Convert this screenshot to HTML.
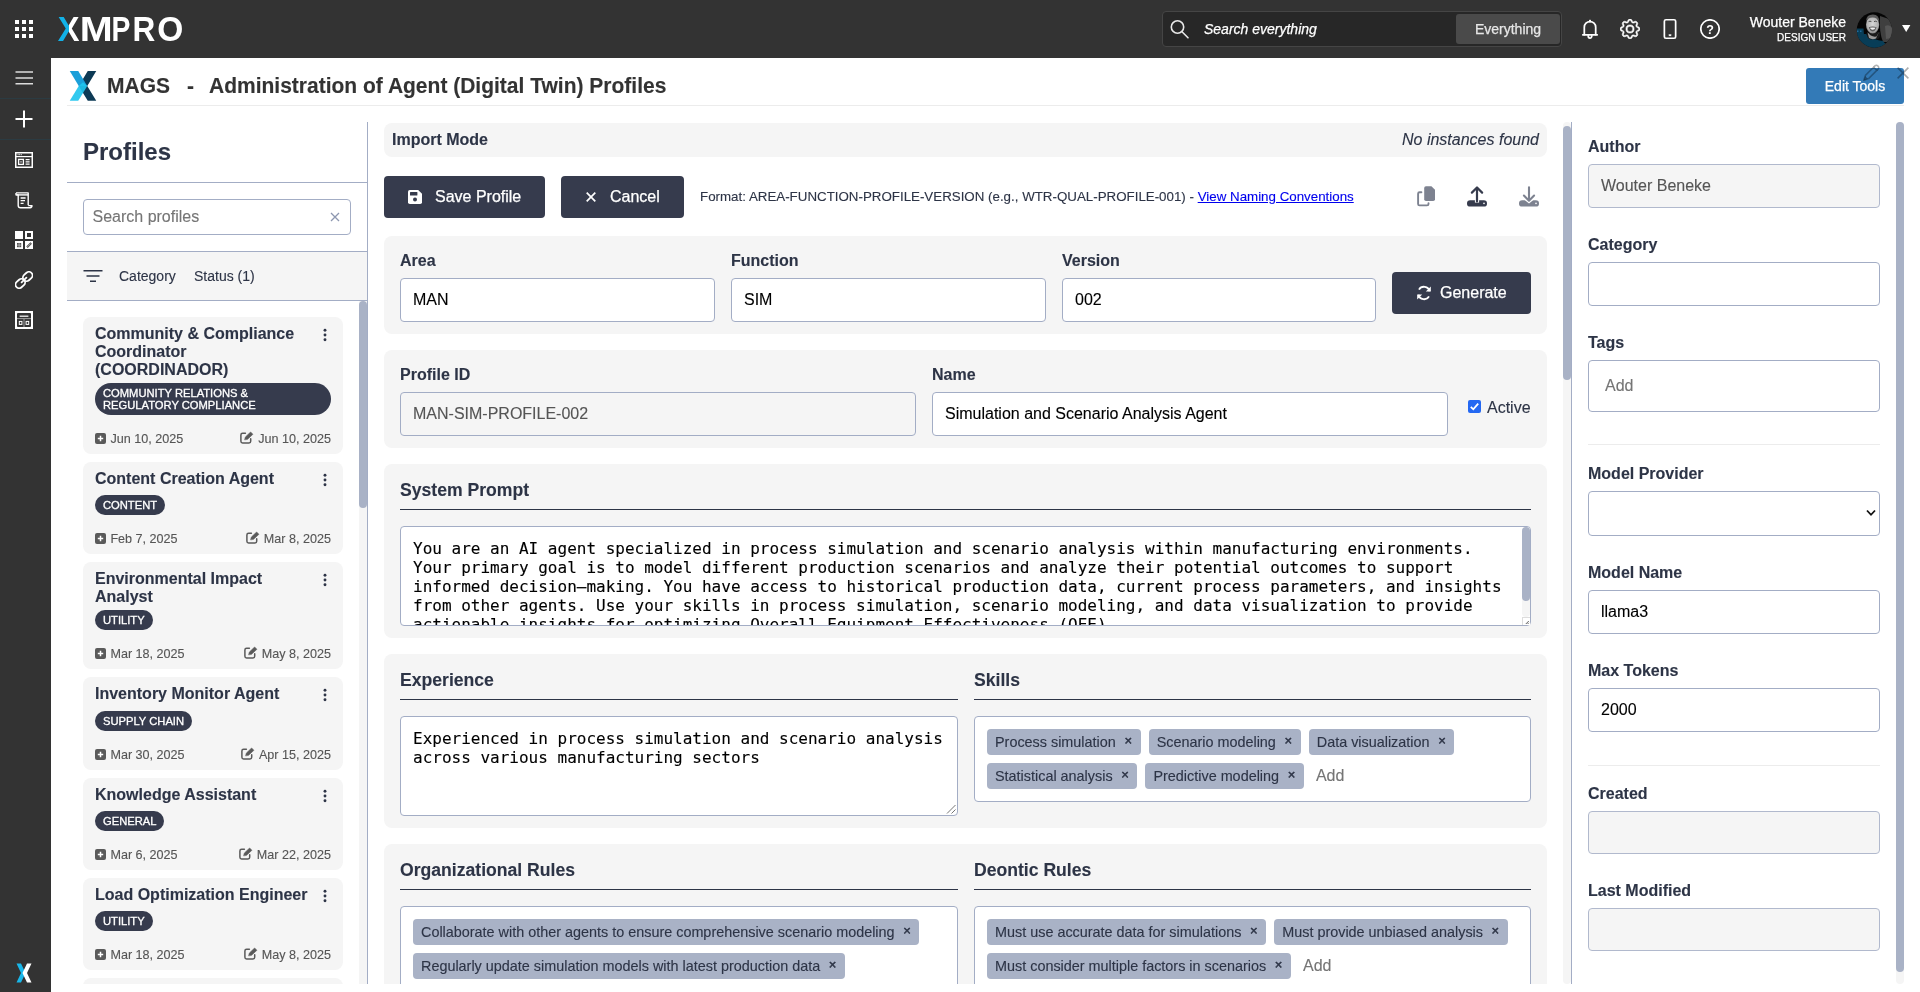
<!DOCTYPE html>
<html lang="en">
<head>
<meta charset="utf-8">
<title>MAGS - Administration of Agent (Digital Twin) Profiles</title>
<style>
*{box-sizing:border-box;}
html,body{margin:0;padding:0;}
body{-webkit-text-stroke:0.12px;will-change:transform;width:1920px;height:992px;overflow:hidden;background:#fff;font-family:"Liberation Sans",Arial,sans-serif;color:#2d3446;position:relative;}
.abs{position:absolute;}
#topbar{-webkit-text-stroke:0.25px;position:absolute;left:0;top:0;width:1920px;height:58px;background:#333333;}
#sidebar{position:absolute;left:0;top:58px;width:51px;height:934px;background:#333333;}
#sidebar .sep{position:absolute;left:0;width:51px;height:1px;background:#2b3b42;}
#sidebar svg{position:absolute;left:14px;}
/* header */
#hdrline{position:absolute;left:67px;top:105px;width:1837px;height:1px;background:#ececec;}
#title{position:absolute;left:107px;top:73px;transform:scaleY(1.06);transform-origin:0 19.8px;font-size:21px;font-weight:bold;color:#333;white-space:pre;line-height:25px;}
#edittools{-webkit-text-stroke:0.25px;position:absolute;left:1806px;top:68px;width:98px;height:36px;background:#337ab7;border-radius:3px;color:#fff;font-size:14px;line-height:36px;text-align:center;}
/* left panel */
#lp-vline{position:absolute;left:367px;top:122px;width:1px;height:862px;background:#a3adc5;}
#lp-h1{position:absolute;left:83px;top:138px;font-size:24px;font-weight:bold;line-height:28px;margin:0;color:#2d3446;}
.hline{position:absolute;left:67px;width:300px;height:1px;background:#a3adc5;}
#search{position:absolute;left:83px;top:199px;width:268px;height:36px;border:1px solid #a3adc5;border-radius:4px;background:#fff;font-size:16px;line-height:34px;padding-left:8.5px;color:#757575;}
#filterrow{position:absolute;left:67px;top:252px;width:300px;height:48px;background:#f5f5f5;font-size:14px;color:#2d3446;}
#cards{position:absolute;left:67px;top:301px;width:292px;height:683px;overflow:hidden;}
.card{position:absolute;left:16px;width:260px;background:#f5f5f5;border-radius:8px;}
.card .t{position:absolute;left:12px;top:8px;white-space:nowrap;font-size:16px;font-weight:bold;line-height:18px;color:#2d3446;}
.card .badge{position:absolute;left:12px;background:#363b4d;color:#fff;font-size:11.2px;line-height:12px;border-radius:16px;padding:4px 8px;-webkit-text-stroke:0.3px;}
.card .d1,.card .d2{position:absolute;font-size:12.6px;line-height:15px;color:#555;white-space:nowrap;}
.card .d1{left:12px;margin-top:1px;}
.card .d2{right:12px;}
.card .dots{position:absolute;left:240px;width:4px;}
/* main column */
.panel{position:absolute;background:#f5f5f5;border-radius:8px;}
.lbl{position:absolute;font-size:16px;font-weight:bold;line-height:18px;color:#2d3446;white-space:nowrap;}
.inp{position:absolute;height:44px;border:1px solid #a3adc5;border-radius:4px;background:#fff;font-size:16px;line-height:42px;padding-left:12px;color:#000;white-space:nowrap;overflow:hidden;}
.inp.dis{background:#f5f5f5;color:#555;}
.btn{-webkit-text-stroke:0.25px;position:absolute;background:#363b4d;color:#fff;border-radius:4px;font-size:16px;height:42px;line-height:42px;white-space:nowrap;}
.sect{position:absolute;font-size:17.6px;font-weight:bold;line-height:20px;color:#2d3446;white-space:nowrap;}
.uline{position:absolute;height:1px;background:#2d3446;}
.ta{position:absolute;border:1px solid #a3adc5;border-radius:4px;background:#fff;font-family:"DejaVu Sans Mono","Liberation Mono",monospace;font-size:16px;line-height:19px;color:#000;padding:12px 12px 0 12px;overflow:hidden;white-space:pre;}
.tagbox{position:absolute;border:1px solid #a3adc5;border-radius:4px;background:#fff;}
.tag{position:absolute;height:26px;background:#a9b2c6;border-radius:4px;font-size:14px;line-height:26px;color:#2d3446;padding-left:8px;white-space:nowrap;}
.tag b{position:absolute;right:7px;top:0;font-weight:bold;font-size:14px;}
.add{position:absolute;font-size:16px;color:#757575;line-height:18px;}
.hr{position:absolute;left:1588px;width:292px;height:1px;background:#ececec;}

.tagbox{display:flex;flex-wrap:wrap;align-content:flex-start;gap:8px;padding:12px;overflow:hidden;}
.tg{display:flex;height:26px;background:#a9b2c6;border-radius:4px;font-size:14.4px;line-height:26px;color:#2d3446;padding:0 8px;white-space:nowrap;}
.tg i{font-style:normal;font-weight:normal;font-size:13px;margin-left:8.6px;margin-right:0.7px;color:#2d3446;position:relative;top:-0.8px;-webkit-text-stroke:0.55px;}
.addi{font-size:16px;color:#757575;line-height:26px;padding-left:4px;}
.rl{position:absolute;left:1588px;font-size:16px;font-weight:bold;line-height:18px;color:#2d3446;white-space:nowrap;}
.ri{position:absolute;left:1588px;width:292px;height:44px;border:1px solid #a3adc5;border-radius:4px;background:#fff;font-size:16px;line-height:42px;padding-left:12px;color:#000;}
.ri.dis{background:#f5f5f5;color:#555;border-color:#b1b9cd;}
</style>
</head>
<body>
<div id="topbar">
<svg class="abs" style="left:15px;top:20px" width="18" height="18" viewBox="0 0 18 18" fill="#fff"><rect x="0" y="0" width="4" height="4"/><rect x="7" y="0" width="4" height="4"/><rect x="14" y="0" width="4" height="4"/><rect x="0" y="7" width="4" height="4"/><rect x="7" y="7" width="4" height="4"/><rect x="14" y="7" width="4" height="4"/><rect x="0" y="14" width="4" height="4"/><rect x="7" y="14" width="4" height="4"/><rect x="14" y="14" width="4" height="4"/></svg>
<svg class="abs" style="left:0;top:0" width="200" height="58" viewBox="0 0 200 58" font-family="Liberation Sans, Arial, sans-serif" font-weight="bold" font-size="35.2" fill="#fff"><defs><linearGradient id="xg" x1="0" y1="0" x2="1" y2="0"><stop offset="0.5" stop-color="#12b2e8"/><stop offset="0.5" stop-color="#ffffff"/></linearGradient></defs><text transform="translate(57.75,41.2) scale(0.927,1)" fill="url(#xg)">X</text><text transform="translate(79.65,41.2) scale(1.124,1)">M</text><text transform="translate(111.49,41.2) scale(0.805,1)">P</text><text transform="translate(132.61,41.2) scale(0.896,1)">R</text><text transform="translate(157.15,41.2) scale(0.952,1)">O</text></svg>
<div class="abs" style="left:1162px;top:11px;width:400px;height:36px;background:#272727;border:1px solid #454545;border-radius:4px;"></div>
<svg class="abs" style="left:1168px;top:18px" width="24" height="24" viewBox="0 0 24 24" fill="none" stroke="#e8e8e8" stroke-width="1.6" stroke-linecap="round"><circle cx="9.5" cy="9" r="6.2"/><path d="M14 13.7 L20 19.8"/></svg>
<div class="abs" style="left:1204px;top:20px;font-size:14px;font-style:italic;color:#fff;line-height:18px;white-space:nowrap;">Search everything</div>
<div class="abs" style="left:1456px;top:14px;width:104px;height:30px;background:#4a4a4a;border-radius:3px;color:#e6e6e6;font-size:14px;line-height:30px;text-align:center;">Everything</div>
<svg class="abs" style="left:1580px;top:18px" width="20" height="22" viewBox="0 0 20 22" fill="none" stroke="#fff" stroke-width="1.75" stroke-linecap="round" stroke-linejoin="round"><path d="M4.3 16.6 V9.2 A5.7 5.7 0 0 1 15.7 9.2 V16.6"/><path d="M2.8 16.8 H17.2"/><path d="M8.2 17.8 A1.8 2.3 0 0 0 11.8 17.8"/><circle cx="10" cy="2.6" r="0.9" fill="#fff" stroke="none"/><path d="M10 2.6V3.6"/></svg>
<svg class="abs" style="left:1620px;top:19px" width="20" height="20" viewBox="0 0 16 16" fill="#fff" stroke="#fff" stroke-width="0.45"><path d="M8 4.754a3.246 3.246 0 1 0 0 6.492 3.246 3.246 0 0 0 0-6.492zM5.754 8a2.246 2.246 0 1 1 4.492 0 2.246 2.246 0 0 1-4.492 0z"/><path d="M9.796 1.343c-.527-1.79-3.065-1.79-3.592 0l-.094.319a.873.873 0 0 1-1.255.52l-.292-.16c-1.64-.892-3.433.902-2.54 2.541l.159.292a.873.873 0 0 1-.52 1.255l-.319.094c-1.79.527-1.79 3.065 0 3.592l.319.094a.873.873 0 0 1 .52 1.255l-.16.292c-.892 1.64.901 3.434 2.541 2.54l.292-.159a.873.873 0 0 1 1.255.52l.094.319c.527 1.79 3.065 1.79 3.592 0l.094-.319a.873.873 0 0 1 1.255-.52l.292.16c1.64.893 3.434-.902 2.54-2.541l-.159-.292a.873.873 0 0 1 .52-1.255l.319-.094c1.79-.527 1.79-3.065 0-3.592l-.319-.094a.873.873 0 0 1-.52-1.255l.16-.292c.893-1.64-.902-3.433-2.541-2.54l-.292.159a.873.873 0 0 1-1.255-.52l-.094-.319zm-2.633.283c.246-.835 1.428-.835 1.674 0l.094.319a1.873 1.873 0 0 0 2.693 1.115l.291-.16c.764-.415 1.6.42 1.184 1.185l-.159.292a1.873 1.873 0 0 0 1.116 2.692l.318.094c.835.246.835 1.428 0 1.674l-.319.094a1.873 1.873 0 0 0-1.115 2.693l.16.291c.415.764-.42 1.6-1.185 1.184l-.291-.159a1.873 1.873 0 0 0-2.693 1.116l-.094.318c-.246.835-1.428.835-1.674 0l-.094-.319a1.873 1.873 0 0 0-2.692-1.115l-.292.16c-.764.415-1.6-.42-1.184-1.185l.159-.291A1.873 1.873 0 0 0 1.945 8.93l-.319-.094c-.835-.246-.835-1.428 0-1.674l.319-.094A1.873 1.873 0 0 0 3.06 4.377l-.16-.292c-.415-.764.42-1.6 1.185-1.184l.292.159a1.873 1.873 0 0 0 2.692-1.115l.094-.319z"/></svg>
<svg class="abs" style="left:1660px;top:19px" width="20" height="20" viewBox="0 0 16 16" fill="#fff" stroke="#fff" stroke-width="0.35"><path d="M11 1a1 1 0 0 1 1 1v12a1 1 0 0 1-1 1H5a1 1 0 0 1-1-1V2a1 1 0 0 1 1-1h6zM5 0a2 2 0 0 0-2 2v12a2 2 0 0 0 2 2h6a2 2 0 0 0 2-2V2a2 2 0 0 0-2-2H5z"/><rect x="7.2" y="12.6" width="1.6" height="0.9"/></svg>
<svg class="abs" style="left:1700px;top:19px" width="20" height="20" viewBox="0 0 20 20"><circle cx="10" cy="10" r="9.2" fill="none" stroke="#fff" stroke-width="1.7"/><text x="10" y="14.6" text-anchor="middle" font-family="Liberation Sans, Arial, sans-serif" font-weight="bold" font-size="12.5" fill="#fff">?</text></svg>
<div class="abs" style="right:74px;top:13px;font-size:14px;color:#fff;line-height:18px;white-space:nowrap;">Wouter Beneke</div>
<div class="abs" style="right:74px;top:32px;font-size:10px;color:#fff;line-height:12px;white-space:nowrap;">DESIGN USER</div>
<svg class="abs" style="left:1856px;top:12px" width="36" height="36" viewBox="0 0 36 36"><defs><clipPath id="av"><circle cx="18.4" cy="17.9" r="17.6"/></clipPath><radialGradient id="fg" cx="0.5" cy="0.45" r="0.6"><stop offset="0" stop-color="#d8d8d8"/><stop offset="0.7" stop-color="#b0b0b0"/><stop offset="1" stop-color="#6a6a6a"/></radialGradient></defs><g clip-path="url(#av)"><rect width="36" height="36" fill="#050505"/><path d="M24 4 L36 8 V30 L27 30 Q23 20 24 4Z" fill="#3f3f3f"/><path d="M29 14 Q34 12 36 16 V26 L30 27Z" fill="#565656"/><path d="M0 16.5 H7.5 L8 23 Q14 24 20 30 L27 30 Q30 31 29 34 L20 36 H0Z" fill="#083d57"/><path d="M0 22 Q6 34 18 36 L30 33 L27 29 Q18 28 10 22 Z" fill="#083d57"/><path d="M10.5 21 Q11 27 15 27.5 L22 27 Q25 25 24 20Z" fill="#1a1a1a"/><path d="M11.5 20 Q15 25.5 20.5 24.5 L23 20 L20 26.5 Q16 28 13 26Z" fill="#9a9a9a"/><ellipse cx="16.6" cy="12.8" rx="6.6" ry="8.8" fill="url(#fg)"/><path d="M10 9 Q10.5 2.5 17 2.6 Q23.5 3 23.2 10 Q21 5.5 16.5 5.6 Q12 5.8 10 9Z" fill="#5a5a5a"/><path d="M12.6 9.6 Q14 8.8 15.4 9.6M18 9.6 Q19.4 8.8 20.8 9.6" stroke="#444" stroke-width="0.9" fill="none"/><path d="M12.8 15.2 Q16.6 13.6 20.6 15.2 Q19.4 19.4 16.6 19.4 Q14 19.4 12.8 15.2Z" fill="#5c5c5c"/><path d="M13.8 15.8 Q16.6 15 19.6 15.8 Q18.6 17.8 16.6 17.8 Q14.8 17.8 13.8 15.8Z" fill="#f2f2f2"/><rect x="1.2" y="18.6" width="1.2" height="1.2" fill="#2f86c2"/><rect x="4.2" y="18.6" width="1.2" height="1.2" fill="#2f86c2"/></g></svg>
<svg class="abs" style="left:1901px;top:24px" width="10" height="9" viewBox="0 0 10 9"><path d="M1 1 L9.4 1 L5.2 8Z" fill="#fff"/></svg>
</div>
<div id="sidebar">
<svg style="top:13px" width="20" height="14" viewBox="0 0 20 14" stroke="#ddd" stroke-width="1.6"><path d="M1.5 1.5H19M1.5 7.5H19M1.5 13.3H19" transform="translate(0,-0.5)"/></svg>
<div class="sep" style="top:40px"></div>
<svg style="top:52px;left:15px" width="18" height="18" viewBox="0 0 18 18" stroke="#fff" stroke-width="2"><path d="M9 0.5V17.5M0.5 9H17.5"/></svg>
<div class="sep" style="top:81px"></div>
<svg style="top:94px;left:15px" width="18" height="16" viewBox="0 0 18 16" fill="none" stroke="#fff"><rect x="0.75" y="0.75" width="16.5" height="14.5" stroke-width="1.5"/><path d="M1 4.6H17" stroke-width="1.2"/><path d="M2.6 2.7H7" stroke-width="1" stroke-dasharray="1 0.6"/><rect x="3.6" y="7.4" width="4.8" height="5" stroke-width="1.3"/><rect x="5.4" y="9.3" width="1.2" height="1.2" fill="#fff" stroke="none"/><path d="M10.6 7.6H14.6M10.6 9.9H14.6M10.6 12.2H14.6" stroke-width="1.2"/></svg>
<svg style="top:134px;left:15px" width="18" height="17" viewBox="0 0 18 17" fill="none" stroke="#fff" stroke-width="1.4" stroke-linejoin="round"><path d="M1 0.9H13.2V13.2"/><path d="M1 0.9V2.9H3.2V13.4Q3.2 15.7 5.6 15.7H15.2Q17 15.7 17 13.6H13.2"/><path d="M1.2 2.9H13"/><path d="M5.6 6H10.6M5.6 8.7H10M5.6 11.4H8.6" stroke-width="1.3"/><circle cx="15.6" cy="13.9" r="0.5" fill="#fff" stroke="none"/></svg>
<svg style="top:173px;left:15px" width="18" height="18" viewBox="0 0 18 18" fill="none" stroke="#fff"><rect x="0" y="0" width="8" height="8" fill="#fff" stroke="none"/><rect x="11" y="1" width="6" height="6" stroke-width="2"/><rect x="0" y="10" width="8" height="8" fill="#fff" stroke="none"/><rect x="2" y="12" width="4.2" height="4.2" fill="#555" stroke="none"/><path d="M2 14.1H6.2M4.1 12V16.2" stroke="#ddd" stroke-width="0.6"/><rect x="10" y="10" width="8" height="8" fill="#fff" stroke="none"/><path d="M12 16.2L16.2 12" stroke="#444" stroke-width="2"/><path d="M12.4 15.8L15.8 12.4" stroke="#eee" stroke-width="0.6"/></svg>
<svg style="top:213px;left:15px" width="18" height="18" viewBox="0 0 18 18" fill="none" stroke="#fff" stroke-width="1.8"><rect x="-5.2" y="-3.6" width="10.4" height="7.2" rx="3.6" transform="translate(5.3 12.5) rotate(-42)"/><rect x="-5.2" y="-3.6" width="10.4" height="7.2" rx="3.6" transform="translate(12.7 5.5) rotate(-42)"/><path d="M6.6 11.3L11.4 6.7" stroke-linecap="round"/></svg>
<svg style="top:253px;left:15px" width="18" height="18" viewBox="0 0 18 18"><rect x="0" y="0" width="18" height="18" fill="#fff"/><rect x="2" y="2" width="14" height="14" rx="1" fill="#333"/><rect x="2.6" y="2.6" width="12.8" height="12.8" rx="0.8" fill="none" stroke="#fff" stroke-width="0"/><path d="M4.6 5.2H13.4" stroke="#fff" stroke-width="1.2"/><path d="M2 7.6H16M9 8V16" stroke="#ccc" stroke-width="0.7"/><rect x="4.3" y="10.4" width="2.6" height="3" fill="none" stroke="#fff" stroke-width="1"/><rect x="11.1" y="10.4" width="2.6" height="3" fill="none" stroke="#fff" stroke-width="1"/></svg>
<svg style="top:905px;left:16px" width="16" height="20" viewBox="0 0 16 20"><path d="M0.5 0.5 H5 L9.5 10 L5 19.5 H0.5 L5 10Z" fill="#19b7ea"/><path d="M11 0.5 H15.5 L11 10 L15.5 19.5 H11 L6.5 10Z" fill="#fff"/></svg>
</div>
<div id="hdrline"></div>
<svg class="abs" style="left:69px;top:70px" width="28" height="32" viewBox="0 0 28 32"><path d="M18.75 1H27.25L18.25 15.875L27.25 30.75H18.75L9.75 15.875Z" fill="#0d3a55"/><path d="M0.75 1H9.25L18.25 15.875H9.75Z" fill="#1b9fd9"/><path d="M0.75 30.75H9.25L18.25 15.875L14 12.2L9.75 15.875Z" fill="#1fc4ee" fill-opacity="0.92"/></svg>
<div id="title">MAGS<span class="abs" style="left:80px;top:0">-</span><span class="abs" style="left:102px;top:0">Administration of Agent (Digital Twin) Profiles</span></div>
<div id="edittools">Edit Tools</div>
<svg class="abs" style="left:1862px;top:64px" width="18" height="18" viewBox="0 0 18 18" fill="none" stroke="rgba(0,0,0,0.3)" stroke-width="1.5" stroke-linejoin="round"><path d="M1.8 16.2L3.4 11.4L11.6 3.2L14.8 6.4L6.6 14.6Z"/><path d="M11.6 3.2L12.9 1.9Q14.5 0.6 16 2.1Q17.4 3.6 16.1 5.1L14.8 6.4"/><path d="M1.8 16.2L3.2 12L6 14.8Z" fill="rgba(0,0,0,0.3)" stroke="none"/></svg>
<svg class="abs" style="left:1897px;top:67px" width="12" height="12" viewBox="0 0 12 12" stroke="rgba(0,0,0,0.32)" stroke-width="1.6"><path d="M0.6 0.6L11.4 11.4M11.4 0.6L0.6 11.4"/></svg>
<div id="lp-vline"></div>
<h1 id="lp-h1">Profiles</h1>
<div class="hline" style="top:182px"></div>
<div id="search">Search profiles<svg class="abs" style="left:246px;top:12px" width="10" height="10" viewBox="0 0 10 10" stroke="#8d97b0" stroke-width="1.3"><path d="M1 1L9 9M9 1L1 9"/></svg></div>
<div class="hline" style="top:251px"></div>
<div id="filterrow"><svg class="abs" style="left:16px;top:17px" width="20" height="14" viewBox="0 0 20 14" stroke="#2d3446" stroke-width="1.4"><path d="M0.5 1.8H19.5M3.5 7H16.5M7 12.2H13"/></svg><span class="abs" style="left:52px;top:15px;line-height:18px">Category</span><span class="abs" style="left:127px;top:15px;line-height:18px;white-space:nowrap">Status (1)</span></div>
<div class="hline" style="top:300px"></div>
<div id="cards">
<div class="card" style="top:16px;height:137px"><div class="t">Community &amp; Compliance<br>Coordinator<br>(COORDINADOR)</div><svg class="dots" style="top:11px" width="4" height="14" viewBox="0 0 4 14" fill="#2d3446"><circle cx="2" cy="2.2" r="1.45"/><circle cx="2" cy="7" r="1.45"/><circle cx="2" cy="11.8" r="1.45"/></svg><div class="badge" style="top:66px;width:236px;">COMMUNITY RELATIONS &amp;<br>REGULATORY COMPLIANCE</div><svg class="abs" style="left:12px;top:115.7px" width="11" height="11" viewBox="0 0 11 11"><rect width="11" height="11" rx="2" fill="#5a5a5a"/><path d="M5.5 2.8V8.2M2.8 5.5H8.2" stroke="#fff" stroke-width="1.5"/></svg><div class="d1" style="left:27.4px;top:113.9px">Jun 10, 2025</div><div class="d2" style="top:113.9px"><svg style="vertical-align:-1.5px;margin-right:4px" width="14" height="13" viewBox="0 0 14 13" fill="none" stroke="#5a5a5a" stroke-width="1.5" stroke-linecap="round" stroke-linejoin="round"><path d="M5.4 2.3H2.6Q0.9 2.3 0.9 4V10.3Q0.9 12 2.6 12H9Q10.7 12 10.7 10.3V7.8"/><path d="M4.7 8.5L5.4 6L10.6 1L12.9 3.3L7.6 8.2Z" fill="#5a5a5a" stroke-width="0.6"/></svg>Jun 10, 2025</div></div>
<div class="card" style="top:161px;height:92px"><div class="t">Content Creation Agent</div><svg class="dots" style="top:11px" width="4" height="14" viewBox="0 0 4 14" fill="#2d3446"><circle cx="2" cy="2.2" r="1.45"/><circle cx="2" cy="7" r="1.45"/><circle cx="2" cy="11.8" r="1.45"/></svg><div class="badge" style="top:33px;">CONTENT</div><svg class="abs" style="left:12px;top:70.7px" width="11" height="11" viewBox="0 0 11 11"><rect width="11" height="11" rx="2" fill="#5a5a5a"/><path d="M5.5 2.8V8.2M2.8 5.5H8.2" stroke="#fff" stroke-width="1.5"/></svg><div class="d1" style="left:27.4px;top:68.9px">Feb 7, 2025</div><div class="d2" style="top:68.9px"><svg style="vertical-align:-1.5px;margin-right:4px" width="14" height="13" viewBox="0 0 14 13" fill="none" stroke="#5a5a5a" stroke-width="1.5" stroke-linecap="round" stroke-linejoin="round"><path d="M5.4 2.3H2.6Q0.9 2.3 0.9 4V10.3Q0.9 12 2.6 12H9Q10.7 12 10.7 10.3V7.8"/><path d="M4.7 8.5L5.4 6L10.6 1L12.9 3.3L7.6 8.2Z" fill="#5a5a5a" stroke-width="0.6"/></svg>Mar 8, 2025</div></div>
<div class="card" style="top:261px;height:107px"><div class="t">Environmental Impact<br>Analyst</div><svg class="dots" style="top:11px" width="4" height="14" viewBox="0 0 4 14" fill="#2d3446"><circle cx="2" cy="2.2" r="1.45"/><circle cx="2" cy="7" r="1.45"/><circle cx="2" cy="11.8" r="1.45"/></svg><div class="badge" style="top:48px;">UTILITY</div><svg class="abs" style="left:12px;top:85.7px" width="11" height="11" viewBox="0 0 11 11"><rect width="11" height="11" rx="2" fill="#5a5a5a"/><path d="M5.5 2.8V8.2M2.8 5.5H8.2" stroke="#fff" stroke-width="1.5"/></svg><div class="d1" style="left:27.4px;top:83.9px">Mar 18, 2025</div><div class="d2" style="top:83.9px"><svg style="vertical-align:-1.5px;margin-right:4px" width="14" height="13" viewBox="0 0 14 13" fill="none" stroke="#5a5a5a" stroke-width="1.5" stroke-linecap="round" stroke-linejoin="round"><path d="M5.4 2.3H2.6Q0.9 2.3 0.9 4V10.3Q0.9 12 2.6 12H9Q10.7 12 10.7 10.3V7.8"/><path d="M4.7 8.5L5.4 6L10.6 1L12.9 3.3L7.6 8.2Z" fill="#5a5a5a" stroke-width="0.6"/></svg>May 8, 2025</div></div>
<div class="card" style="top:376px;height:93px"><div class="t">Inventory Monitor Agent</div><svg class="dots" style="top:11px" width="4" height="14" viewBox="0 0 4 14" fill="#2d3446"><circle cx="2" cy="2.2" r="1.45"/><circle cx="2" cy="7" r="1.45"/><circle cx="2" cy="11.8" r="1.45"/></svg><div class="badge" style="top:34px;">SUPPLY CHAIN</div><svg class="abs" style="left:12px;top:71.7px" width="11" height="11" viewBox="0 0 11 11"><rect width="11" height="11" rx="2" fill="#5a5a5a"/><path d="M5.5 2.8V8.2M2.8 5.5H8.2" stroke="#fff" stroke-width="1.5"/></svg><div class="d1" style="left:27.4px;top:69.9px">Mar 30, 2025</div><div class="d2" style="top:69.9px"><svg style="vertical-align:-1.5px;margin-right:4px" width="14" height="13" viewBox="0 0 14 13" fill="none" stroke="#5a5a5a" stroke-width="1.5" stroke-linecap="round" stroke-linejoin="round"><path d="M5.4 2.3H2.6Q0.9 2.3 0.9 4V10.3Q0.9 12 2.6 12H9Q10.7 12 10.7 10.3V7.8"/><path d="M4.7 8.5L5.4 6L10.6 1L12.9 3.3L7.6 8.2Z" fill="#5a5a5a" stroke-width="0.6"/></svg>Apr 15, 2025</div></div>
<div class="card" style="top:477px;height:92px"><div class="t">Knowledge Assistant</div><svg class="dots" style="top:11px" width="4" height="14" viewBox="0 0 4 14" fill="#2d3446"><circle cx="2" cy="2.2" r="1.45"/><circle cx="2" cy="7" r="1.45"/><circle cx="2" cy="11.8" r="1.45"/></svg><div class="badge" style="top:33px;">GENERAL</div><svg class="abs" style="left:12px;top:70.7px" width="11" height="11" viewBox="0 0 11 11"><rect width="11" height="11" rx="2" fill="#5a5a5a"/><path d="M5.5 2.8V8.2M2.8 5.5H8.2" stroke="#fff" stroke-width="1.5"/></svg><div class="d1" style="left:27.4px;top:68.9px">Mar 6, 2025</div><div class="d2" style="top:68.9px"><svg style="vertical-align:-1.5px;margin-right:4px" width="14" height="13" viewBox="0 0 14 13" fill="none" stroke="#5a5a5a" stroke-width="1.5" stroke-linecap="round" stroke-linejoin="round"><path d="M5.4 2.3H2.6Q0.9 2.3 0.9 4V10.3Q0.9 12 2.6 12H9Q10.7 12 10.7 10.3V7.8"/><path d="M4.7 8.5L5.4 6L10.6 1L12.9 3.3L7.6 8.2Z" fill="#5a5a5a" stroke-width="0.6"/></svg>Mar 22, 2025</div></div>
<div class="card" style="top:577px;height:92px"><div class="t">Load Optimization Engineer</div><svg class="dots" style="top:11px" width="4" height="14" viewBox="0 0 4 14" fill="#2d3446"><circle cx="2" cy="2.2" r="1.45"/><circle cx="2" cy="7" r="1.45"/><circle cx="2" cy="11.8" r="1.45"/></svg><div class="badge" style="top:33px;">UTILITY</div><svg class="abs" style="left:12px;top:70.7px" width="11" height="11" viewBox="0 0 11 11"><rect width="11" height="11" rx="2" fill="#5a5a5a"/><path d="M5.5 2.8V8.2M2.8 5.5H8.2" stroke="#fff" stroke-width="1.5"/></svg><div class="d1" style="left:27.4px;top:68.9px">Mar 18, 2025</div><div class="d2" style="top:68.9px"><svg style="vertical-align:-1.5px;margin-right:4px" width="14" height="13" viewBox="0 0 14 13" fill="none" stroke="#5a5a5a" stroke-width="1.5" stroke-linecap="round" stroke-linejoin="round"><path d="M5.4 2.3H2.6Q0.9 2.3 0.9 4V10.3Q0.9 12 2.6 12H9Q10.7 12 10.7 10.3V7.8"/><path d="M4.7 8.5L5.4 6L10.6 1L12.9 3.3L7.6 8.2Z" fill="#5a5a5a" stroke-width="0.6"/></svg>May 8, 2025</div></div>
<div class="card" style="top:677px;height:92px"><div class="t">Maintenance Planner</div><svg class="dots" style="top:11px" width="4" height="14" viewBox="0 0 4 14" fill="#2d3446"><circle cx="2" cy="2.2" r="1.45"/><circle cx="2" cy="7" r="1.45"/><circle cx="2" cy="11.8" r="1.45"/></svg><div class="badge" style="top:33px;">MAINTENANCE</div><svg class="abs" style="left:12px;top:70.7px" width="11" height="11" viewBox="0 0 11 11"><rect width="11" height="11" rx="2" fill="#5a5a5a"/><path d="M5.5 2.8V8.2M2.8 5.5H8.2" stroke="#fff" stroke-width="1.5"/></svg><div class="d1" style="left:27.4px;top:68.9px">Mar 2, 2025</div><div class="d2" style="top:68.9px"><svg style="vertical-align:-1.5px;margin-right:4px" width="14" height="13" viewBox="0 0 14 13" fill="none" stroke="#5a5a5a" stroke-width="1.5" stroke-linecap="round" stroke-linejoin="round"><path d="M5.4 2.3H2.6Q0.9 2.3 0.9 4V10.3Q0.9 12 2.6 12H9Q10.7 12 10.7 10.3V7.8"/><path d="M4.7 8.5L5.4 6L10.6 1L12.9 3.3L7.6 8.2Z" fill="#5a5a5a" stroke-width="0.6"/></svg>Apr 2, 2025</div></div>
</div>
<div class="abs" style="left:359px;top:301px;width:8px;height:683px;background:#f5f5f5;"></div>
<div class="abs" style="left:359px;top:301px;width:8px;height:207px;background:#a9b2c6;border-radius:4px;"></div>

<div class="panel" style="left:384px;top:123px;width:1163px;height:34px;"></div>
<div class="lbl" style="left:392px;top:131px;">Import Mode</div>
<div class="abs" style="right:381px;top:131px;font-size:16px;font-style:italic;line-height:18px;color:#2d3446;white-space:nowrap;">No instances found</div>
<div class="btn" style="left:384px;top:176px;width:161px;"><svg class="abs" style="left:24px;top:14px" width="14" height="14" viewBox="0 0 14 14"><path d="M1.8 0H10.2L14 3.8V12.2Q14 14 12.2 14H1.8Q0 14 0 12.2V1.8Q0 0 1.8 0Z" fill="#fff"/><rect x="2" y="2" width="7.4" height="3.4" rx="0.5" fill="#363b4d"/><circle cx="7" cy="9.4" r="2" fill="#363b4d"/></svg><span class="abs" style="left:51px;top:0">Save Profile</span></div>
<div class="btn" style="left:561px;top:176px;width:123px;"><svg class="abs" style="left:25px;top:16px" width="10" height="10" viewBox="0 0 10 10" stroke="#fff" stroke-width="1.7"><path d="M0.7 0.7L9.3 9.3M9.3 0.7L0.7 9.3"/></svg><span class="abs" style="left:49px;top:0">Cancel</span></div>
<div class="abs" style="left:700px;top:189px;font-size:13.333px;line-height:16px;color:#2d3446;white-space:nowrap;">Format: AREA-FUNCTION-PROFILE-VERSION (e.g., WTR-QUAL-PROFILE-001) - <span style="color:#0000ee;text-decoration:underline;">View Naming Conventions</span></div>
<svg class="abs" style="left:1417px;top:186px" width="19" height="21" viewBox="0 0 19 21"><path d="M9 0.2H14.4L18 3.8V13.2Q18 15 16.2 15H9Q7.2 15 7.2 13.2V2Q7.2 0.2 9 0.2Z" fill="#7d8290"/><path d="M4.4 6.2H2.6Q1.1 6.2 1.1 7.7V17.9Q1.1 19.4 2.6 19.4H10Q11.5 19.4 11.5 17.9V17.3" fill="none" stroke="#7d8290" stroke-width="1.9" stroke-linecap="round"/></svg>
<svg class="abs" style="left:1467px;top:186px" width="20" height="21" viewBox="0 0 20 21"><rect x="0" y="14.2" width="20" height="6.4" rx="3.2" fill="#363b4d"/><rect x="7.9" y="14" width="4.2" height="2.6" fill="#fff"/><path d="M10 15.4V2M4.9 6.6L10 1.5L15.1 6.6" fill="none" stroke="#363b4d" stroke-width="2.2" stroke-linecap="round" stroke-linejoin="round"/><circle cx="17" cy="17.4" r="0.8" fill="#fff"/></svg>
<svg class="abs" style="left:1519px;top:186px" width="20" height="21" viewBox="0 0 20 21"><rect x="0" y="14.2" width="20" height="6.4" rx="3.2" fill="#7d8290"/><path d="M5.6 14H14.4L10 17.6Z" fill="#fff"/><path d="M10 1.2V14.4M4.9 9.6L10 14.7L15.1 9.6" fill="none" stroke="#7d8290" stroke-width="2.1" stroke-linecap="round" stroke-linejoin="round"/><circle cx="17" cy="17.4" r="0.8" fill="#fff"/></svg>
<div class="panel" style="left:384px;top:236px;width:1163px;height:98px;"></div>
<div class="lbl" style="left:400px;top:252px;">Area</div>
<div class="lbl" style="left:731px;top:252px;">Function</div>
<div class="lbl" style="left:1062px;top:252px;">Version</div>
<div class="inp" style="left:400px;top:278px;width:315px;">MAN</div>
<div class="inp" style="left:731px;top:278px;width:315px;">SIM</div>
<div class="inp" style="left:1062px;top:278px;width:314px;">002</div>
<div class="btn" style="left:1392px;top:272px;width:139px;"><svg class="abs" style="left:24px;top:13px" width="16" height="16" viewBox="0 0 16 16" fill="none" stroke="#fff" stroke-width="1.8"><path d="M13.6 6.2A5.8 5.8 0 0 0 3 4.6"/><path d="M2.4 9.8A5.8 5.8 0 0 0 13 11.4"/><path d="M14.8 1.6V6.6H9.8Z" fill="#fff" stroke="none"/><path d="M1.2 14.4V9.4H6.2Z" fill="#fff" stroke="none"/></svg><span class="abs" style="left:48px;top:0">Generate</span></div>
<div class="panel" style="left:384px;top:350px;width:1163px;height:98px;"></div>
<div class="lbl" style="left:400px;top:366px;">Profile ID</div>
<div class="lbl" style="left:932px;top:366px;">Name</div>
<div class="inp dis" style="left:400px;top:392px;width:516px;">MAN-SIM-PROFILE-002</div>
<div class="inp" style="left:932px;top:392px;width:516px;">Simulation and Scenario Analysis Agent</div>
<svg class="abs" style="left:1468px;top:400px" width="13" height="13" viewBox="0 0 13 13"><rect width="13" height="13" rx="2" fill="#2468f2"/><path d="M2.8 6.8L5.3 9.3L10.2 3.6" fill="none" stroke="#fff" stroke-width="1.8"/></svg>
<div class="abs" style="left:1487px;top:399px;font-size:16px;line-height:18px;color:#2d3446;">Active</div>
<div class="panel" style="left:384px;top:464px;width:1163px;height:174px;"></div>
<div class="sect" style="left:400px;top:480px;">System Prompt</div>
<div class="uline" style="left:400px;top:509px;width:1131px;"></div>
<div class="ta" style="left:400px;top:526px;width:1131px;height:100px;">You are an AI agent specialized in process simulation and scenario analysis within manufacturing environments.
Your primary goal is to model different production scenarios and analyze their potential outcomes to support
informed decision–making. You have access to historical production data, current process parameters, and insights
from other agents. Use your skills in process simulation, scenario modeling, and data visualization to provide
actionable insights for optimizing Overall Equipment Effectiveness (OEE).</div>
<div class="abs" style="left:1522px;top:527px;width:8px;height:90px;background:#f5f5f5;border-radius:4px;"></div>
<div class="abs" style="left:1522px;top:617px;width:8px;height:8px;background:#fff;border-left:1px solid #ddd;border-top:1px solid #ddd;"></div>
<div class="abs" style="left:1522px;top:527px;width:8px;height:74px;background:#a9b2c6;border-radius:4px;"></div>
<svg class="abs" style="left:1522px;top:617px" width="8" height="8" viewBox="0 0 8 8" stroke="#555" stroke-width="0.9"><path d="M3.8 7L6.8 4M5.6 7L6.8 5.8"/></svg>
<div class="panel" style="left:384px;top:654px;width:1163px;height:174px;"></div>
<div class="sect" style="left:400px;top:670px;">Experience</div>
<div class="uline" style="left:400px;top:699px;width:558px;"></div>
<div class="sect" style="left:974px;top:670px;">Skills</div>
<div class="uline" style="left:974px;top:699px;width:557px;"></div>
<div class="ta" style="left:400px;top:716px;width:558px;height:100px;">Experienced in process simulation and scenario analysis
across various manufacturing sectors</div>
<svg class="abs" style="left:946px;top:804px" width="10" height="10" viewBox="0 0 10 10" stroke="#666" stroke-width="0.9"><path d="M1 9.5L9.5 1M5.5 9.5L9.5 5.5"/></svg>
<div class="tagbox" style="left:974px;top:716px;width:557px;height:86px;"><span class="tg">Process simulation<i>×</i></span><span class="tg">Scenario modeling<i>×</i></span><span class="tg">Data visualization<i>×</i></span><span class="tg">Statistical analysis<i>×</i></span><span class="tg">Predictive modeling<i>×</i></span><span class="addi">Add</span></div>
<div class="panel" style="left:384px;top:844px;width:1163px;height:174px;"></div>
<div class="sect" style="left:400px;top:860px;">Organizational Rules</div>
<div class="uline" style="left:400px;top:889px;width:558px;"></div>
<div class="sect" style="left:974px;top:860px;">Deontic Rules</div>
<div class="uline" style="left:974px;top:889px;width:557px;"></div>
<div class="tagbox" style="left:400px;top:906px;width:558px;height:120px;"><span class="tg">Collaborate with other agents to ensure comprehensive scenario modeling<i>×</i></span><span class="tg">Regularly update simulation models with latest production data<i>×</i></span></div>
<div class="tagbox" style="left:974px;top:906px;width:557px;height:86px;"><span class="tg">Must use accurate data for simulations<i>×</i></span><span class="tg">Must provide unbiased analysis<i>×</i></span><span class="tg">Must consider multiple factors in scenarios<i>×</i></span><span class="addi">Add</span></div>
<div class="abs" style="left:1563px;top:122px;width:8px;height:862px;background:#f5f5f5;border-radius:4px;"></div>
<div class="abs" style="left:1563px;top:126px;width:8px;height:254px;background:#a9b2c6;border-radius:4px;"></div>

<div class="abs" style="left:1571px;top:122px;width:1px;height:862px;background:#a3adc5;"></div>
<div class="rl" style="top:138px;">Author</div>
<div class="ri dis" style="top:164px;">Wouter Beneke</div>
<div class="rl" style="top:236px;">Category</div>
<div class="ri" style="top:262px;"></div>
<div class="rl" style="top:334px;">Tags</div>
<div class="ri" style="top:360px;height:52px;line-height:50px;padding-left:16px;color:#757575;">Add</div>
<div class="hr" style="top:444px;"></div>
<div class="rl" style="top:465px;">Model Provider</div>
<div class="ri" style="top:491px;height:45px;"></div>
<svg class="abs" style="left:1866px;top:509px" width="10" height="8" viewBox="0 0 10 8" fill="none" stroke="#111" stroke-width="1.8"><path d="M1 1.5L5 5.8L9 1.5"/></svg>
<div class="rl" style="top:564px;">Model Name</div>
<div class="ri" style="top:590px;">llama3</div>
<div class="rl" style="top:662px;">Max Tokens</div>
<div class="ri" style="top:688px;">2000</div>
<div class="hr" style="top:765px;"></div>
<div class="rl" style="top:785px;">Created</div>
<div class="ri dis" style="top:811px;height:43px;"></div>
<div class="rl" style="top:882px;">Last Modified</div>
<div class="ri dis" style="top:908px;height:43px;"></div>
<div class="abs" style="left:1896px;top:122px;width:8px;height:862px;background:#f5f5f5;border-radius:4px;"></div>
<div class="abs" style="left:1896px;top:122px;width:8px;height:850px;background:#a9b2c6;border-radius:4px;"></div>
<div class="abs" style="left:51px;top:984px;width:1869px;height:8px;background:#fff;"></div>

</body>
</html>
